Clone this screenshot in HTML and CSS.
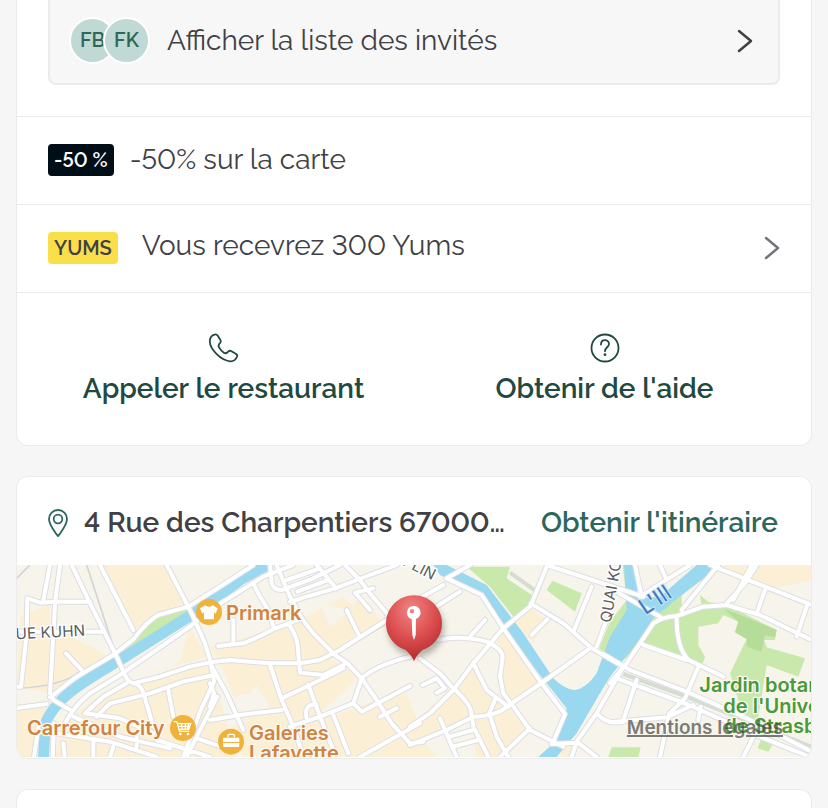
FILE: index.html
```html
<!DOCTYPE html>
<html lang="fr">
<head>
<meta charset="utf-8">
<meta name="viewport" content="width=device-width, initial-scale=1">
<title>Réservation</title>
<link rel="stylesheet" href="styles.css">
</head>
<body>
<main class="page">
  <section class="card card-booking">
    <div class="guests">
      <button class="guests-button" type="button">
        <span class="avatars"><span class="avatar">FB</span><span class="avatar">FK</span></span>
        <span class="row-text">Afficher la liste des invités</span>
        <svg class="chevron" viewBox="0 0 16 24" aria-hidden="true"><path d="M2 2l12 10L2 22"/></svg>
      </button>
    </div>
    <div class="row">
      <span class="badge badge-dark">-50 %</span>
      <span class="row-text">-50% sur la carte</span>
    </div>
    <button class="row row-yums" type="button">
      <span class="badge badge-yellow">YUMS</span>
      <span class="row-text">Vous recevrez 300 Yums</span>
      <svg class="chevron chevron-soft" viewBox="0 0 16 24" aria-hidden="true"><path d="M2 2l12 10L2 22"/></svg>
    </button>
    <div class="actions">
      <a class="action" href="#appeler">
        <svg class="action-icon" viewBox="0 0 32 32" aria-hidden="true"><path d="M6.500 2.600C7.800 2.100 9 2.600 9.600 3.500L12.500 8.100C13.100 9.200 12.900 10 12.100 10.900C10.400 12.600 9.900 13.400 10.900 15.200C12 17.300 14.200 19.700 16.200 20.900C17.800 21.800 18.800 21.300 20.200 19.700C21.100 18.600 22 18.500 23 19L27.400 21.600C28.900 22.300 29.500 23.300 29.100 24.500C27.800 27.800 25.500 29.600 22 29.300C12.600 28.400 2 17.200 1.800 9.600C1.800 5.800 3.500 3.400 6.500 2.600Z"/></svg>
        <span>Appeler le restaurant</span>
      </a>
      <a class="action" href="#aide">
        <svg class="action-icon" viewBox="0 0 32 32" aria-hidden="true"><circle cx="16" cy="16" r="13.500"/><path d="M12 12.500C12 6.700 20 6.900 20 12C20 15.300 16 15.200 16 19.200"/><circle class="dot" cx="16" cy="22.700" r="1.400"/></svg>
        <span>Obtenir de l'aide</span>
      </a>
    </div>
  </section>

  <section class="card card-place">
    <header class="place">
      <svg class="place-icon" viewBox="0 0 20 28" aria-hidden="true"><path d="M10 27C8.500 25.500 1 15.500 1 10A9 9 0 0 1 19 10C19 15.500 11.500 25.500 10 27Z"/><circle cx="10" cy="10" r="4.300"/></svg>
      <span class="address">4 Rue des Charpentiers 67000…</span>
      <a class="directions" href="#itineraire">Obtenir l'itinéraire</a>
    </header>
    <div class="map">
      <svg class="map-drawing" viewBox="21 15 2382 576" preserveAspectRatio="xMidYMid slice" role="img" aria-label="Plan du quartier">
        <defs>
          <radialGradient id="pin-fill" cx="45%" cy="22%" r="75%"><stop offset="0" stop-color="#f08484"/><stop offset=".55" stop-color="#dd5051"/><stop offset="1" stop-color="#b62e30"/></radialGradient>
          <filter id="pin-shadow" x="-30%" y="-30%" width="160%" height="160%"><feGaussianBlur stdDeviation="9"/></filter>
          <g id="roads">
            <g>
              <path d="M185 15L240 130L320 290L345 345Q355 368 372 370Q395 375 402 405L430 500M120 412L200 350L310 285L370 238Q410 185 445 165L535 140L630 80L730 15M165 490Q190 440 240 400L330 345L540 200L600 150L680 100L760 50L850 15M470 15L545 160L585 250L602 305L612 365L570 455L520 591"/>
              <path d="M270 15L370 210M240 125H135L90 128L52 115L50 220L33 380H0M120 15L100 122M150 15L136 120L120 400L130 420L185 452M20 215H280M168 280L215 330M0 447L110 432M350 370L280 410L225 460M370 370L450 350L540 320L600 307L660 300L780 310L870 310L930 300L990 270L1130 180M260 470L300 430L420 400L520 365L612 345M225 460L330 475L430 520M475 390L490 470M622 410L560 530L530 591M140 520L300 545L440 591M190 470L330 530L480 565M560 535L650 565M250 540V591M310 560L300 591M380 530V560M85 500L72 591M132 490L128 591M160 550L164 591M440 540L600 591"/>
            </g>
            <g transform="translate(600 0)">
              <path d="M200 15L240 110L275 175L310 220L375 285L412 310L455 355L500 420L545 490L600 550L640 545"/>
              <path d="M25 258L100 250Q150 230 190 208L275 175M70 180V250M130 70L150 110L172 145L192 205M180 15L185 70Q190 90 215 90L310 55L390 15M230 60L330 25M262 95L355 60M240 125L375 85L480 45L560 15M320 15L378 85M405 15L450 60L480 100L535 165M235 190Q265 235 264 270L270 338L340 345L410 310M180 315L215 420L250 500L280 591M215 415L300 375L400 325M295 375L330 470L370 570M455 355L430 430L330 470L240 500M455 355Q500 315 600 290M430 430L455 455L600 378M510 470L560 445M370 465L415 580M450 591L540 540L630 490M0 310L50 400L100 510M0 480L90 465L215 450M410 150L445 222M480 150L435 98L490 85M0 370L12 400L0 440M320 435Q280 430 290 475"/>
            </g>
            <g transform="translate(1200 0)">
              <path d="M0 500L60 460L130 390L190 310L280 205L362 138L412 15M30 295L90 340L130 385Q180 430 183 455L190 500L235 591M85 240Q150 225 230 245Q285 270 277 300L270 350L280 400L310 440L360 510L460 560M110 55L215 105L280 205L395 370L465 462L430 545M362 130L460 190L545 265L640 320M410 15L700 110M540 265L390 372L290 440Q260 468 190 470L110 510L0 555M640 320L560 460L500 545L485 591"/>
              <path d="M180 230L225 180M30 115L100 75M70 145L150 95M180 15L110 55M412 178L365 225M545 80L490 215M590 180L560 260M190 310L230 390L295 440M258 412L238 460L260 530L295 591M90 475L140 591M118 530L190 510M130 560L205 540M360 505L270 591M500 545L560 591M425 552L500 548M560 460Q590 495 640 485M38 375L80 355L104 385L80 398"/>
            </g>
            <g transform="translate(1800 0)">
              <path d="M0 370L50 310L130 190Q160 170 200 168L280 140L350 135L450 165L605 240M-20 282L60 330L230 395L400 470L605 575M20 355L230 432L450 530L600 591M350 130L405 70L440 15M300 15L605 135M215 150L325 15"/>
              <path d="M200 175Q200 265 235 300L340 350M100 255L230 300M265 320L225 415L178 460L150 591M370 120L425 15M465 90L440 160M590 140L560 230M20 95L150 170M75 15L95 110M150 15L170 60M90 110L240 15M80 360L40 480M0 487L170 472L250 435M272 440L265 480M440 510L400 591"/>
            </g>
          </g>
        </defs>

        <rect class="land" x="0" y="0" width="2420" height="610"/>
        <g class="urban">
          <path d="M270 15H470L530 140L440 165L370 215ZM30 170L120 130L120 400L20 380ZM300 290L215 330L130 400L130 200ZM20 430L110 440L70 591H20ZM540 200L590 290L380 350L400 330Q510 340 520 270ZM370 375L600 310L680 591H130L170 480L280 400Z"/>
          <path d="M600 260L840 195L1000 110L1080 190L950 290L1050 350L930 460L700 480L640 330ZM960 470L1130 410L1280 591H700L660 500L820 450ZM1050 110L1120 190L1050 220L1020 150ZM1130 410L1190 400L1230 500L1170 560ZM1200 500L1400 310L1440 400L1500 450L1560 510L1480 591H1400L1380 470L1200 555ZM1455 230L1480 205L1590 370L1500 430L1470 380L1485 290ZM1510 180L1560 145L1610 180L1570 250ZM1660 555L1700 545L1690 591H1650ZM2130 15H2403V60L2270 90L2200 50Z"/>
        </g>
        <g class="land">
          <path d="M350 330L510 240Q530 290 500 310L380 350ZM930 130L1020 150L960 200ZM670 410L720 400L740 375L780 440L720 465L680 460Z"/>
        </g>
        <g class="park">
          <path d="M325 285L445 165L535 140L545 155L345 295ZM1370 20H1500L1490 55L1565 105L1555 140L1510 170L1440 80ZM1610 90L1627 62L1715 100L1695 155ZM1768 265L1800 185L1850 120L1838 15L1870 15L1870 120L1810 300ZM1905 250L1950 185L2015 160V105L2130 20H2080L1960 120L1880 240L1840 300Z"/>
          <path d="M2000 172L2075 140L2070 105L2095 125L2150 135L2300 210L2295 240H2262L2270 262L2385 295L2365 350L2270 315L2240 500L2200 470L2160 340L2210 237L2175 217L2185 185L2140 165L2125 190L2065 200V255L2085 290L2075 320L2030 300L1900 250L1950 185ZM1805 562H1892L1885 591H1795ZM2260 520L2295 540L2275 575L2243 565Z"/>
        </g>
        <path class="park-deep" d="M2140 145L2300 210L2295 232L2265 225L2255 275L2210 260L2210 237L2175 217L2185 185Z"/>
        <g class="water">
          <path class="river" d="M100 600L106 490Q125 445 170 405Q210 370 330 300L540 168L630 105L690 60L780 10"/>
          <path d="M1310 15L1340 30L1430 75L1540 220L1630 355Q1660 385 1690 390Q1725 390 1760 340L1800 230L1850 150L1842 15H1872L1885 115L1950 110L2060 15H2130L1990 125L1930 175L1880 250L1840 300L1800 350L1770 400L1700 520L1640 591H1585L1630 550L1665 470L1670 445L1590 345L1490 210L1410 105L1290 45L1270 15Z"/>
        </g>
        <path class="tram" d="M1840 342L2030 410L2403 560M1500 38L1580 95M960 290L1125 190"/>
        <path class="rail" d="M230 15L320 290M215 330Q160 380 20 385M60 15L20 55"/>
        <use href="#roads" class="road-casing"/>
        <use href="#roads" class="road"/>

        <g class="street-label">
          <text x="-12" y="238" transform="rotate(-3 20 238)">RUE KUHN</text>
          <text x="1176" y="14" transform="rotate(27 1176 14)">PLIN</text>
          <text x="1802" y="190" transform="rotate(-80 1802 190)">QUAI KOCH</text>
        </g>
        <text class="river-label" x="1906" y="166" transform="rotate(-34 1906 166)">L'Ill</text>
        <g class="poi">
          <circle cx="597" cy="156" r="39"/>
          <path d="M586 136Q597 145 608 136L623 145L617 161L612 157V178H582V157L577 161L570 145Z"/>
          <circle cx="519" cy="504" r="39"/>
          <path class="poi-line" d="M491 485H500L509 514H538M502 491H542L536 508H507M514 491L517 508M526 491V508M536 491L532 508M504 499H539"/>
          <circle class="white" cx="511" cy="522" r="4"/><circle class="white" cx="534" cy="522" r="4"/>
          <circle cx="663" cy="545" r="39"/>
          <path d="M641 533H686Q688 533 688 536V546H639V536Q639 533 641 533ZM639 549H688V558Q688 561 685 561H642Q639 561 639 558Z"/>
          <path class="poi-line" d="M654 532V527Q654 523 658 523H669Q673 523 673 527V532"/>
        </g>
        <g class="poi-label">
          <text x="648" y="179">Primark</text>
          <text x="51" y="525">Carrefour City</text>
          <text x="717" y="540">Galeries</text>
          <text x="717" y="601">Lafayette</text>
        </g>
        <g class="park-label">
          <text x="2068" y="396">Jardin botanique</text>
          <text x="2140" y="458">de l'Université</text>
          <text x="2143" y="520">de Strasbourg</text>
        </g>
        <ellipse class="pin-shadow" cx="1218" cy="205" rx="84" ry="86" filter="url(#pin-shadow)"/>
        <path class="pin" d="M1212 303Q1206 288 1187 270A84 84 0 1 1 1237 270Q1218 288 1212 303Z"/>
        <path class="pin-mark" fill-rule="evenodd" d="M1211 138A20 20 0 0 1 1218 177L1217 225L1212 240L1207 225L1205 177A20 20 0 0 1 1211 138ZM1206 147A6 6 0 1 0 1206 160A6 6 0 1 0 1206 147Z"/>
      </svg>
      <a class="legal" href="#mentions">Mentions légales</a>
    </div>
  </section>

  <section class="card card-next" aria-label="Suite"></section>
</main>
</body>
</html>
```
FILE: styles.css
```css
* { box-sizing: border-box; }

body {
  margin: 0;
  background: #f6f6f6;
  color: #404045;
  font-family: Raleway, Lato, sans-serif;
  font-size: 28px;
  font-variant-numeric: lining-nums;
  line-height: 36px;
}

button {
  font: inherit;
  font-variant-numeric: inherit;
  color: inherit;
  text-align: left;
  cursor: pointer;
}

a { text-decoration: none; }

.page {
  display: flex;
  flex-direction: column;
  gap: 30px;
  min-height: 100vh;
  padding: 0 16px;
}

.card {
  background: #fff;
  border: 1px solid #ebebeb;
  border-radius: 12px;
  overflow: hidden;
}

.card-booking {
  border-top: 0;
  border-radius: 0 0 12px 12px;
}

.guests { padding: 0 31px 31px; }

.guests-button {
  display: flex;
  align-items: center;
  width: 100%;
  height: 85px;
  padding: 0 25px 2px 19px;
  background: #f7f7f7;
  border: 2px solid #ebebeb;
  border-top: 0;
  border-radius: 0 0 8px 8px;
}

.avatars {
  display: flex;
  margin-right: 17px;
}

.avatar {
  width: 47px;
  height: 47px;
  border: 2px solid #fff;
  border-radius: 50%;
  background: #c0d9d5;
  color: #2d675c;
  font-size: 20px;
  font-weight: 600;
  line-height: 43px;
  text-align: center;
}

.avatar + .avatar { margin-left: -13px; }

.row-text {
  flex: 1;
  font-weight: 400;
}

.chevron {
  width: 16px;
  height: 24px;
  fill: none;
  stroke: #404045;
  stroke-width: 2.500;
  stroke-linecap: round;
  stroke-linejoin: round;
}

.chevron-soft { stroke: #74747c; }

.row {
  display: flex;
  align-items: center;
  gap: 16px;
  width: 100%;
  height: 88px;
  padding: 0 31px 2px;
  background: none;
  border: 0;
  border-top: 1px solid #ebebeb;
}

.row-yums { gap: 24px; }

.row-yums .row-text { padding-bottom: 4px; }

.badge {
  padding: 0 6px;
  border-radius: 4px;
  font-size: 20px;
  font-weight: 600;
  line-height: 32px;
}

.badge-dark {
  background: #000e17;
  color: #fff;
}

.badge-yellow { background: #fadf4b; }

.actions {
  display: grid;
  grid-template-columns: 1fr 1fr;
  padding: 39px 16px 38px;
  border-top: 1px solid #ebebeb;
}

.action {
  display: flex;
  flex-direction: column;
  align-items: center;
  gap: 7px;
  color: #22493f;
  font-weight: 600;
}

.action-icon {
  width: 32px;
  height: 32px;
  fill: none;
  stroke: #22493f;
  stroke-width: 1.800;
  stroke-linejoin: round;
  stroke-linecap: round;
}

.dot {
  fill: #22493f;
  stroke: none;
}

.card-place { padding-bottom: 1px; }

.place {
  display: flex;
  align-items: center;
  height: 88px;
  padding: 4px 33px 0 31px;
  font-weight: 600;
}

.place-icon {
  width: 20px;
  height: 28px;
  margin-right: 16px;
  fill: none;
  stroke: #2d675c;
  stroke-width: 1.800;
}

.address {
  flex: 1;
  white-space: nowrap;
}

.directions { color: #2d675c; }

.map { position: relative; }

.map-drawing {
  display: block;
  width: 100%;
  height: 192px;
  font-family: Inter, sans-serif;
}

.land { fill: #f6f4eb; }
.urban { fill: #fbefd6; }
.park { fill: #c9e8ab; }
.park-deep { fill: #b5dd99; }
.water { fill: #99d8ef; }

.river {
  fill: none;
  stroke: #99d8ef;
  stroke-width: 33;
}

.tram {
  fill: none;
  stroke: #d5dcd2;
  stroke-width: 12;
}

.rail {
  fill: none;
  stroke: #d4d4d6;
  stroke-width: 5;
}

.road-casing,
.road {
  fill: none;
  stroke-linejoin: round;
  stroke-linecap: round;
}

.road-casing {
  stroke: #dcdee5;
  stroke-width: 18;
}

.road {
  stroke: #fff;
  stroke-width: 12;
}

.street-label {
  fill: #5b5d60;
  stroke: #fff;
  stroke-width: 8;
  paint-order: stroke;
  font-size: 46px;
  font-weight: 400;
}

.river-label {
  fill: #4478bd;
  stroke: #c5e9f7;
  stroke-width: 6;
  paint-order: stroke;
  font-size: 66px;
}

.poi { fill: #efb33b; }

.poi path,
.white { fill: #fff; }

.poi .poi-line {
  fill: none;
  stroke: #fff;
  stroke-width: 4;
}

.poi-label,
.park-label {
  stroke: #fdf8ec;
  stroke-width: 8;
  stroke-linejoin: round;
  paint-order: stroke;
  font-size: 60px;
  font-weight: 600;
}

.poi-label { fill: #ce8445; }
.park-label { fill: #479a3d; }

.pin-shadow {
  fill: #6f6a64;
  opacity: .5;
}

.pin { fill: url(#pin-fill); }
.pin-mark { fill: #fff; }

.legal {
  position: absolute;
  right: 28px;
  bottom: 17px;
  color: rgba(70, 70, 66, .7);
  font-family: Inter, sans-serif;
  font-size: 19px;
  font-weight: 600;
  line-height: 24px;
  text-decoration: underline;
  text-decoration-thickness: 2px;
}

.card-next {
  flex: 1;
  border-bottom: 0;
  border-radius: 12px 12px 0 0;
}
```
